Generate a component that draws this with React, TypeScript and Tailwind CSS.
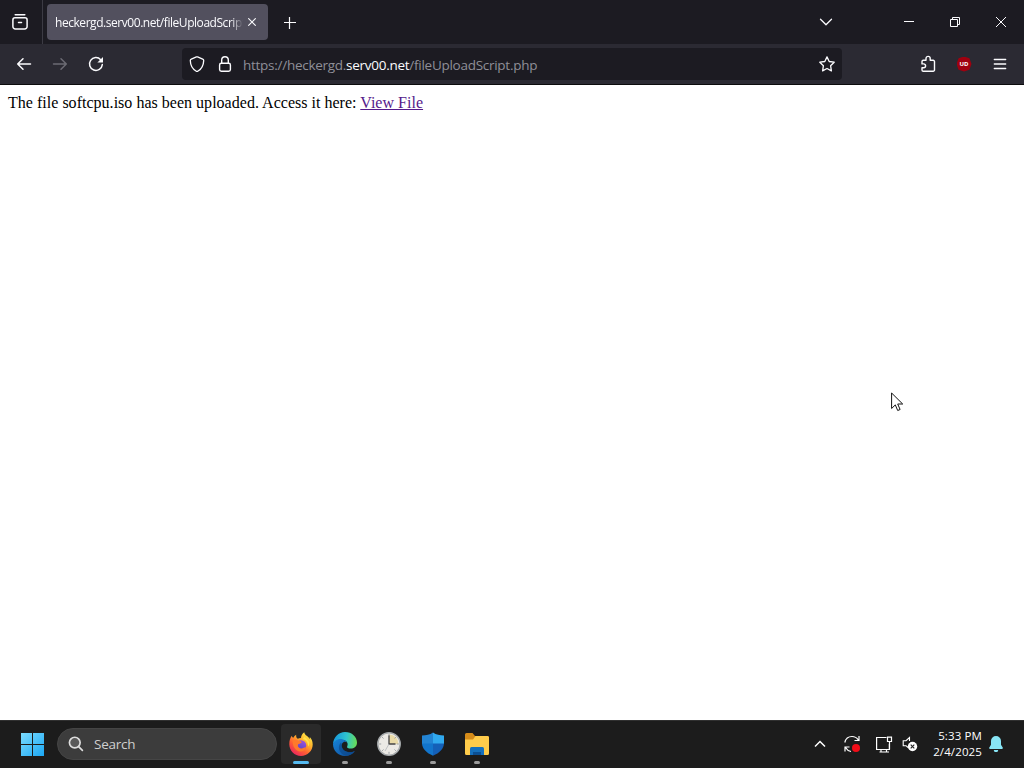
import type { ReactNode } from "react";

const ToolbarButton = ({ children }: { children: ReactNode }) => (
  <button className="w-9 h-8 flex items-center justify-center shrink-0">
    {children}
  </button>
);

const WindowButton = ({ children }: { children: ReactNode }) => (
  <button className="w-[46px] h-11 flex items-center justify-center shrink-0">
    <svg width="12" height="12" viewBox="0 0 12 12" fill="none" stroke="#fbfbfe">
      {children}
    </svg>
  </button>
);

const TabStrip = () => (
  <div className="h-11 flex items-center bg-[#1c1b22]">
    <div className="w-[43px] h-11 flex items-center pl-3 border-r border-[#3c3b44]">
      <svg width="16" height="16" viewBox="0 0 16 16" fill="none" stroke="#fbfbfe" strokeWidth="1.5" strokeLinecap="round">
        <path d="M3.2 .8h9.6" />
        <path d="M3 3.8h10a2.1 2.1 0 0 1 2.1 2.1v6.7a2.4 2.4 0 0 1-2.4 2.4H3.3a2.4 2.4 0 0 1-2.4-2.4V5.9A2.1 2.1 0 0 1 3 3.8z" />
        <path d="M6.5 8.5h3" />
      </svg>
    </div>
    <div className="ml-1 w-[221px] h-9 rounded bg-[#52505e] flex items-center pl-2">
      <div className="w-[188px] pt-px overflow-hidden whitespace-nowrap text-[12px] tracking-[-0.45px] text-[#fbfbfe] [mask-image:linear-gradient(to_left,transparent,black_12px)]">
        heckergd.serv00.net/fileUploadScript.php
      </div>
      <svg className="ml-[5px]" width="8" height="8" viewBox="0 0 8 8" stroke="#fbfbfe" strokeWidth="1.1">
        <path d="M.3.3l7.4 7.4M7.7.3L.3 7.7" />
      </svg>
    </div>
    <button className="ml-4 mt-0.5">
      <svg width="12" height="12" viewBox="0 0 12 12" stroke="#fbfbfe" strokeWidth="1.2">
        <path d="M5.5 0v12M0 5.5h12" />
      </svg>
    </button>
    <div className="grow" />
    <div className="mr-[42px]">
      <ToolbarButton>
        <svg width="14" height="8" viewBox="0 0 14 8" fill="none" stroke="#fbfbfe" strokeWidth="1.3" strokeLinecap="round" strokeLinejoin="round">
          <path d="M1.5 1.3L7 6.7l5.5-5.4" />
        </svg>
      </ToolbarButton>
    </div>
    <WindowButton>
      <path d="M1 5.5h10" />
    </WindowButton>
    <WindowButton>
      <path d="M1.5 3.5h7v7h-7zM3.5 3.5v-2h7v7h-2" />
    </WindowButton>
    <WindowButton>
      <path d="M1 1l10 10M11 1L1 11" />
    </WindowButton>
  </div>
);

const AddressBar = () => (
  <div className="w-[660px] h-8 rounded bg-[#1c1b22] flex items-center pl-[7px] pr-[7px]">
    <svg width="16" height="16" viewBox="0 0 16 16" fill="none" stroke="#fbfbfe" strokeWidth="1.3" strokeLinejoin="round">
      <path d="M7.4.9a1.7 1.7 0 0 1 1.2 0l5.1 2.2c.7.3 1 .8 1 1.5-.2 4.9-2.3 8.600-6 10.700q-.7.3-1.4 0C3.600 13.200 1.400 9.500 1.300 4.600c0-.7.3-1.2 1-1.500z" />
    </svg>
    <svg className="ml-3" width="16" height="16" viewBox="0 0 16 16" fill="none" stroke="#fbfbfe" strokeWidth="1.4">
      <rect x="2.6" y="7.2" width="10.8" height="8.1" rx="1.7" />
      <path d="M4.7 7.200V4a3.300 3.300 0 0 1 6.600 0v3.200" />
    </svg>
    <div className="ml-[10px] pt-[2px] grow whitespace-nowrap text-[13.5px] tracking-[-0.27px] text-[#8f8f98]">
      https://heckergd.<span className="text-[#fbfbfe]">serv00.net</span>/fileUploadScript.php
    </div>
    <svg width="16" height="16" viewBox="0 0 16 16" fill="none" stroke="#fbfbfe" strokeWidth="1.3" strokeLinejoin="round">
      <path d="M8 .9l2.200 4.600 5 .7-3.600 3.500.8 5.200L8 12.500l-4.400 2.400.8-5.200L.8 6.200l5-.7z" />
    </svg>
  </div>
);

const Toolbar = () => (
  <div className="h-[41px] flex items-center px-1.5 bg-[#2b2a33] border-b border-[#0c0c0d]">
    <ToolbarButton>
      <svg width="16" height="14" viewBox="0 0 16 14" fill="none" stroke="#fbfbfe" strokeWidth="1.5" strokeLinecap="round" strokeLinejoin="round">
        <path d="M14.500 7H1.700M7 1.700L1.700 7 7 12.300" />
      </svg>
    </ToolbarButton>
    <ToolbarButton>
      <svg width="16" height="14" viewBox="0 0 16 14" fill="none" stroke="#6c6b74" strokeWidth="1.5" strokeLinecap="round" strokeLinejoin="round">
        <path d="M1.500 7h12.800M9 1.700L14.300 7 9 12.300" />
      </svg>
    </ToolbarButton>
    <ToolbarButton>
      <svg width="16" height="16" viewBox="0 0 16 16" fill="none" stroke="#fbfbfe" strokeWidth="1.5" strokeLinecap="round">
        <path d="M14.300 8.600A6.400 6.400 0 1 1 12.700 3.700" />
        <path d="M15 .9v5.600H9.400z" fill="#fbfbfe" stroke="none" />
      </svg>
    </ToolbarButton>
    <div className="ml-[68px]">
      <AddressBar />
    </div>
    <div className="grow" />
    <ToolbarButton>
      <svg width="16" height="18" viewBox="0 0 16 18" fill="none" stroke="#fbfbfe" strokeWidth="1.4" strokeLinejoin="round">
        <path d="M6 5.300V3.500a2 2 0 0 1 4.200 0v1.800h3a1.300 1.300 0 0 1 1.300 1.300v8.300a1.300 1.300 0 0 1-1.300 1.300H3.300A1.300 1.300 0 0 1 2 14.900v-2.200h1.700a1.700 1.700 0 0 0 0-3.800H2V6.600a1.300 1.300 0 0 1 1.300-1.300z" />
      </svg>
    </ToolbarButton>
    <ToolbarButton>
      <div className="w-[15px] h-[15px] flex items-center justify-center bg-[#a0000f] [clip-path:polygon(50%_0,86%_12%,100%_50%,86%_88%,50%_100%,14%_88%,0_50%,14%_12%)]">
        <span className="text-[6px] leading-none font-bold text-white">UD</span>
      </div>
    </ToolbarButton>
    <ToolbarButton>
      <svg width="14" height="12" viewBox="0 0 14 12" stroke="#fbfbfe" strokeWidth="1.3" strokeLinecap="round">
        <path d="M1.300 1.500h11.400M1.300 6h11.400M1.300 10.500h11.400" />
      </svg>
    </ToolbarButton>
  </div>
);

const FirefoxIcon = () => (
  <svg width="24" height="24" viewBox="0 0 24 24">
    <defs>
      <linearGradient id="fox" x1=".85" y1=".05" x2=".2" y2=".95">
        <stop offset="0" stopColor="#fff04a" />
        <stop offset=".35" stopColor="#ffb32c" />
        <stop offset=".65" stopColor="#ff6231" />
        <stop offset="1" stopColor="#e9245f" />
      </linearGradient>
      <linearGradient id="globe" x1=".8" y1="0" x2=".3" y2="1">
        <stop offset="0" stopColor="#a354dc" />
        <stop offset="1" stopColor="#4c45c7" />
      </linearGradient>
    </defs>
    <path d="M15.300.3c-2.300 1.600-3.200 4-3.300 5.700-1.300 0-2.300.3-3.200.8C7.200 5.700 7 4 7.200 2.700 5.900 3.400 5 4.500 4.300 5.700 3.500 5.500 3 4.700 2.900 3.700 1.300 5.300.3 8.400.3 12.200.3 18.700 5.500 24 12 24s11.700-5.200 11.700-11.500c0-3.500-1.300-6-3.200-7.700.5 1.100.7 2 .7 2.800C19.500 4 15.600 3.800 15.300.3z" fill="url(#fox)" />
    <circle cx="12" cy="13.500" r="5.300" fill="url(#globe)" />
    <path d="M3.600 9c2-1.800 4.400-1.400 5.600-.3 1.200-.2 2.700.2 3.600 1.500-1.100 1.500-2.500 1.300-3.700 2.100-.8 1.900.7 4.400 3.400 4.200 2.100-.1 3-1.500 4.700-1.100-1 2.900-3.200 4.300-5.900 4.100C6.600 19.200 3.600 14.600 3.600 9z" fill="#ff7a2b" />
    <path d="M14 7c3.300.9 5.400 4 5 7.500 1-1 1.400-2.300 1.300-3.800-.7-2.300-2.700-4.400-5.100-5.900z" fill="#ffe14a" />
  </svg>
);

const EdgeIcon = () => (
  <svg width="24" height="24" viewBox="0 0 24 24">
    <defs>
      <linearGradient id="edgeTop" x1="0" y1=".4" x2="1" y2=".5">
        <stop offset="0" stopColor="#1595dc" />
        <stop offset=".55" stopColor="#2fc4cf" />
        <stop offset="1" stopColor="#68dc55" />
      </linearGradient>
      <linearGradient id="edgeBottom" x1="0" y1="0" x2="1" y2="1">
        <stop offset="0" stopColor="#1683d8" />
        <stop offset="1" stopColor="#104d99" />
      </linearGradient>
    </defs>
    <path d="M0 12C.5 5 5.500 0 12 0c7 0 12 5 12 10.500 0 4-3 6-6.300 6-2.200 0-4.200-.8-3.600-1.800 1.300-2.200.7-6.200-4-6.600C5.600 7.700 1.500 9.500 0 12z" fill="url(#edgeTop)" />
    <path d="M0 12c1.300-3.400 5.500-5.500 9.200-4.800 2.300.5 4 1.800 4.600 3.300-3-2.100-5.700 1.100-5 4.300.8 4 5.500 6.300 10.500 5.200.9-.2 1.600-.5 2.600-1C19.700 22.200 16 24 12 24 5.200 24 0 18.600 0 12z" fill="url(#edgeBottom)" />
    <path d="M8 10.600c-3.900 3.800-2.200 10.900 4.200 13.100 3.700.1 7.500-1.700 9.500-4.500-5 2.100-11.300.4-12.500-3.700-.5-1.800-.2-3.600-1.200-4.900z" fill="#0b4789" opacity=".65" />
  </svg>
);

const ClockIcon = () => (
  <svg width="24" height="24" viewBox="0 0 24 24">
    <circle cx="12" cy="12" r="11.2" fill="#eceae5" stroke="#a6aaac" strokeWidth="1.5" />
    <path d="M12 12V2.500A9.500 9.500 0 0 1 21.500 12z" fill="#eadba8" />
    <path d="M12 2.200v2M12 19.800v2M2.200 12h2M19.800 12h2M5.100 5.100l1.400 1.400M17.500 17.500l1.400 1.400M5.100 18.900l1.400-1.400M17.500 6.500l1.400-1.400" stroke="#9da2a5" />
    <path d="M12 3.500V12h6.500" fill="none" stroke="#454545" strokeWidth="1.3" />
    <path d="M12 12l-4 7" stroke="#b4b8bb" strokeWidth=".8" />
  </svg>
);

const DefenderIcon = () => (
  <svg width="24" height="24" viewBox="0 0 24 24">
    <path d="M12 .5C9 2.800 5 3.300 1 3.400V12h11z" fill="#2384d3" />
    <path d="M12 .5c3 2.300 7 2.800 11 2.900V12H12z" fill="#30a9ef" />
    <path d="M1 11.500h11v12.200C5.500 20.900 1.300 17 1 11.500z" fill="#1275cc" />
    <path d="M23 11.500H12v12.200C18.500 20.900 22.700 17 23 11.500z" fill="#1460b8" />
  </svg>
);

const FolderIcon = () => (
  <svg width="26" height="24" viewBox="0 0 26 24">
    <path d="M1 2.500A1.500 1.500 0 0 1 2.500 1h6l2.500 3h12.500A1.500 1.500 0 0 1 25 5.500V20H1z" fill="#d58b19" />
    <path d="M1 7.500h8L11.500 4h12A1.500 1.500 0 0 1 25 5.500v16a1.500 1.500 0 0 1-1.500 1.500h-21A1.500 1.500 0 0 1 1 21.500z" fill="#ffcc4b" />
    <path d="M6 23v-6.500A1.500 1.500 0 0 1 7.500 15h11a1.500 1.500 0 0 1 1.500 1.500V23z" fill="#1570bd" />
    <path d="M9 23v-3h8v3z" fill="#0b4f93" />
  </svg>
);

const TaskbarApp = ({ active, children }: { active?: boolean; children: ReactNode }) => (
  <div
    className={`w-10 h-10 rounded flex flex-col items-center pt-2 ${active ? "bg-[#2a2a2a]" : ""}`}
  >
    {children}
    <div className={`mt-[5px] h-[3px] rounded-full shrink-0 ${active ? "w-4 bg-[#55baf0]" : "w-1.5 bg-[#9b9b9b]"}`} />
  </div>
);

const Taskbar = () => (
  <div className="h-12 flex items-center bg-[#1c1c1c] shadow-[inset_0_1px_0_#303030] font-['Open_Sans','Noto_Sans',sans-serif]">
    <svg className="ml-[21px]" width="23" height="23" viewBox="0 0 23 23">
      <defs>
        <linearGradient id="win" x1="0" y1="0" x2="1" y2="1">
          <stop offset="0" stopColor="#7bdcff" />
          <stop offset="1" stopColor="#1ba7f4" />
        </linearGradient>
      </defs>
      <path d="M0 0h11v11H0zM12 0h11v11H12zM0 12h11v11H0zM12 12h11v11H12z" fill="url(#win)" />
    </svg>
    <div className="ml-[13px] w-[220px] h-8 rounded-full bg-[#3c3c3c] border border-[#454545] flex items-center pl-[10px]">
      <svg width="16" height="16" viewBox="0 0 17 17" fill="none" stroke="#dedede" strokeWidth="1.8" strokeLinecap="round">
        <circle cx="7.2" cy="7" r="5.7" fill="#5a5a5a" />
        <path d="M11.300 11.200l4 4" />
      </svg>
      <span className="ml-[10px] text-[13.5px] tracking-[-0.25px] text-[#cfcfcf]">Search</span>
    </div>
    <div className="ml-1 flex gap-1">
      <TaskbarApp active>
        <FirefoxIcon />
      </TaskbarApp>
      <TaskbarApp>
        <EdgeIcon />
      </TaskbarApp>
      <TaskbarApp>
        <ClockIcon />
      </TaskbarApp>
      <TaskbarApp>
        <DefenderIcon />
      </TaskbarApp>
      <TaskbarApp>
        <FolderIcon />
      </TaskbarApp>
    </div>
    <div className="grow" />
    <svg width="12" height="8" viewBox="0 0 12 8" fill="none" stroke="#fff" strokeWidth="1.5">
      <path d="M1 6.500l5-5 5 5" />
    </svg>
    <svg className="ml-[18px]" width="16" height="18" viewBox="0 0 16 18" fill="none" stroke="#fff" strokeWidth="1.2">
      <path d="M.8 7.500C1.700 3.500 4.500 1.500 8 1.500c2.800 0 5 1.500 6.300 3.500M15 1v4.500h-4.500M1 16.500V12h4.500M1.500 12.500c1.300 2.300 3 3.500 5.500 4" />
      <circle cx="12" cy="13" r="4" fill="#f20d18" stroke="none" />
    </svg>
    <svg className="ml-4" width="17" height="17" viewBox="0 0 17 17" fill="none" stroke="#fff" strokeWidth="1.2">
      <path d="M10.500 1.500H.6v12h12.800V8M3.500 16h9.500M5 13.500V16M10.500 13.500V16" />
      <path d="M11.500 1.200h4v4.300h-4zM13.500 5.500v8" />
    </svg>
    <svg className="ml-[9px]" width="16" height="16" viewBox="0 0 16 16" fill="none" stroke="#fff" strokeWidth="1.1">
      <path d="M7.500 5V1.500L4 4.700H1.200v5H4l2 1.800" />
      <circle cx="10.500" cy="10.500" r="4.7" fill="#fff" stroke="none" />
      <path d="M8.700 8.700l3.600 3.600M12.300 8.700l-3.600 3.600" stroke="#222" />
    </svg>
    <div className="ml-[11px] w-[53px] flex flex-col items-end whitespace-nowrap text-[11.5px] leading-4 tracking-[0.12px] text-white">
      <span>5:33 PM</span>
      <span>2/4/2025</span>
    </div>
    <svg className="ml-[7px] mr-[21px]" width="14" height="16" viewBox="0 0 14 16" fill="#88e5f5">
      <path d="M7 0a5 5 0 0 1 5 5v3.800l1.700 2.700c.4.800 0 1.500-.8 1.500H1.100c-.8 0-1.200-.7-.8-1.500L2 8.800V5a5 5 0 0 1 5-5zM4.800 14h4.400a2.200 2.200 0 0 1-4.400 0z" />
    </svg>
  </div>
);

const App = () => {
  return (
    <div className="relative h-screen w-full flex flex-col overflow-hidden bg-white">
      <header className="font-['Open_Sans','Noto_Sans',sans-serif]">
        <TabStrip />
        <Toolbar />
      </header>
      <main className="grow px-2 pt-[9px] font-['Liberation_Serif',serif] text-[16px] leading-[18px] tracking-[0.02px] text-black">
        The file softcpu.iso has been uploaded. Access it here:{" "}
        <a href="#" className="text-[#551a8b] underline">
          View File
        </a>
      </main>
      <Taskbar />
      <svg className="absolute left-[891px] top-[392px]" width="13" height="20" viewBox="0 0 13 20">
        <path d="M.6 1v15.500l3.700-3.600 2.400 5.600 2.400-1-2.400-5.500h5z" fill="#fff" stroke="#111" strokeWidth="1" />
      </svg>
    </div>
  );
};

export default App;
